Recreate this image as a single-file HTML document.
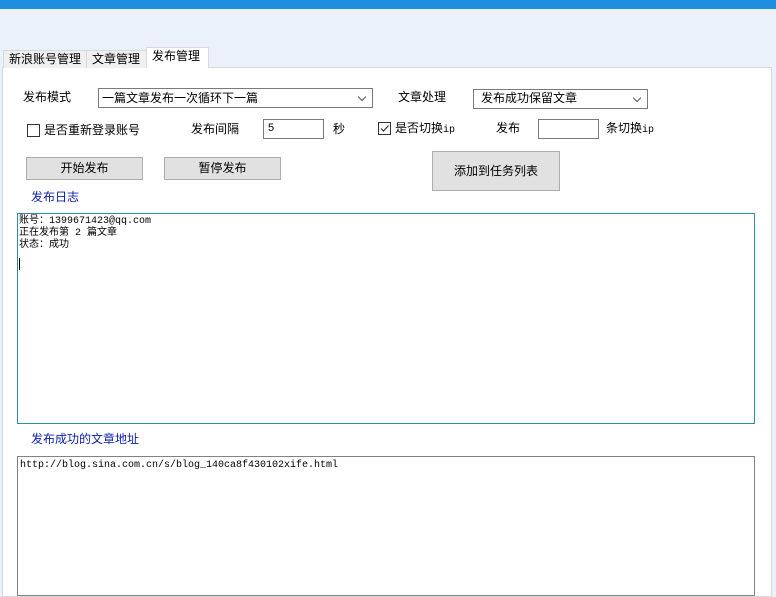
<!DOCTYPE html>
<html><head><meta charset="utf-8"><style>
*{margin:0;padding:0;box-sizing:border-box}
body{width:776px;height:591px;overflow:hidden;background:#eaf1fa;font-family:"Liberation Sans","Noto Sans CJK SC",sans-serif;font-size:12px;line-height:14px;color:#000;position:relative}
.a{position:absolute}
.top{left:0;top:0;width:776px;height:9px;background:#1e8fe0}
.tab{position:absolute;top:50px;height:18px;border:1px solid #d9d9d9;border-bottom:none;background:#f0f0f0;padding:1px 0 0 5px;font-size:12px}
.panel{left:2px;top:67px;width:770px;height:530px;background:#fff;border:1px solid #d9d9d9}
.cb{position:absolute;width:13px;height:13px;border:1px solid #333;background:#fff}
.inp{position:absolute;border:1px solid #7a7a7a;background:#fff;height:20px;padding:2px 4px}
.sel{position:absolute;border:1px solid #7a7a7a;background:#fff;height:20px;padding:1px 3px}
.sel:after{content:"";position:absolute;right:7px;top:5px;width:5px;height:5px;border-right:1px solid #555;border-bottom:1px solid #555;transform:rotate(45deg)}
.btn{position:absolute;background:#e1e1e1;border:1px solid #adadad;text-align:center}
.mono{font-family:"Liberation Mono","Noto Sans CJK SC",monospace;font-size:10px;line-height:12px}
</style></head><body>
<div class="a top"></div>
<div class="a panel"></div>
<div class="tab" style="left:3px;width:84px">新浪账号管理</div>
<div class="tab" style="left:86px;width:61px">文章管理</div>
<div class="tab" style="left:146px;top:47px;height:21px;width:63px;background:#fff;border-color:#d9d9d9">发布管理</div>

<div class="a" style="left:23px;top:90px">发布模式</div>
<div class="sel" style="left:98px;top:88px;width:275px;padding-top:2px">一篇文章发布一次循环下一篇</div>
<div class="a" style="left:398px;top:90px">文章处理</div>
<div class="sel" style="left:473px;top:89px;width:175px;padding-left:7px;padding-top:1px">发布成功保留文章</div>

<div class="cb" style="left:27px;top:124px"></div>
<div class="a" style="left:44px;top:123px">是否重新登录账号</div>
<div class="a" style="left:191px;top:122px">发布间隔</div>
<div class="inp" style="left:263px;top:119px;width:61px;font-size:11px;padding-top:1px">5</div>
<div class="a" style="left:333px;top:122px">秒</div>
<div class="cb" style="left:378px;top:122px;border-color:#333"><svg width="11" height="11" style="position:absolute;left:0;top:0"><path d="M2 5.5 L4.5 8 L9.5 2.5" stroke="#333" stroke-width="1.2" fill="none"/></svg></div>
<div class="a" style="left:395px;top:121px">是否切换<span class="mono">ip</span></div>
<div class="a" style="left:496px;top:121px">发布</div>
<div class="inp" style="left:538px;top:119px;width:61px"></div>
<div class="a" style="left:606px;top:121px">条切换<span class="mono">ip</span></div>

<div class="btn" style="left:26px;top:157px;width:117px;height:23px;padding-top:3px">开始发布</div>
<div class="btn" style="left:164px;top:157px;width:117px;height:23px;padding-top:3px">暂停发布</div>
<div class="btn" style="left:432px;top:151px;width:128px;height:40px;padding-top:12px">添加到任务列表</div>

<div class="a" style="left:31px;top:190px;color:#0a1fa8">发布日志</div>
<div class="a mono" style="left:17px;top:213px;width:738px;height:211px;border:1px solid #2f8ea0;background:#fff;padding:2px 1px">账号：1399671423@qq.com<br>正在发布第 2 篇文章<br>状态：成功<br><span style="display:inline-block;width:1px;height:12px;background:#000;margin-top:6px"></span></div>
<div class="a" style="left:31px;top:432px;color:#0a1fa8">发布成功的文章地址</div>
<div class="a mono" style="left:17px;top:456px;width:738px;height:140px;border:1px solid #828282;background:#fff;padding:3px 2px">http://blog.sina.com.cn/s/blog_140ca8f430102xife.html</div>
</body></html>
